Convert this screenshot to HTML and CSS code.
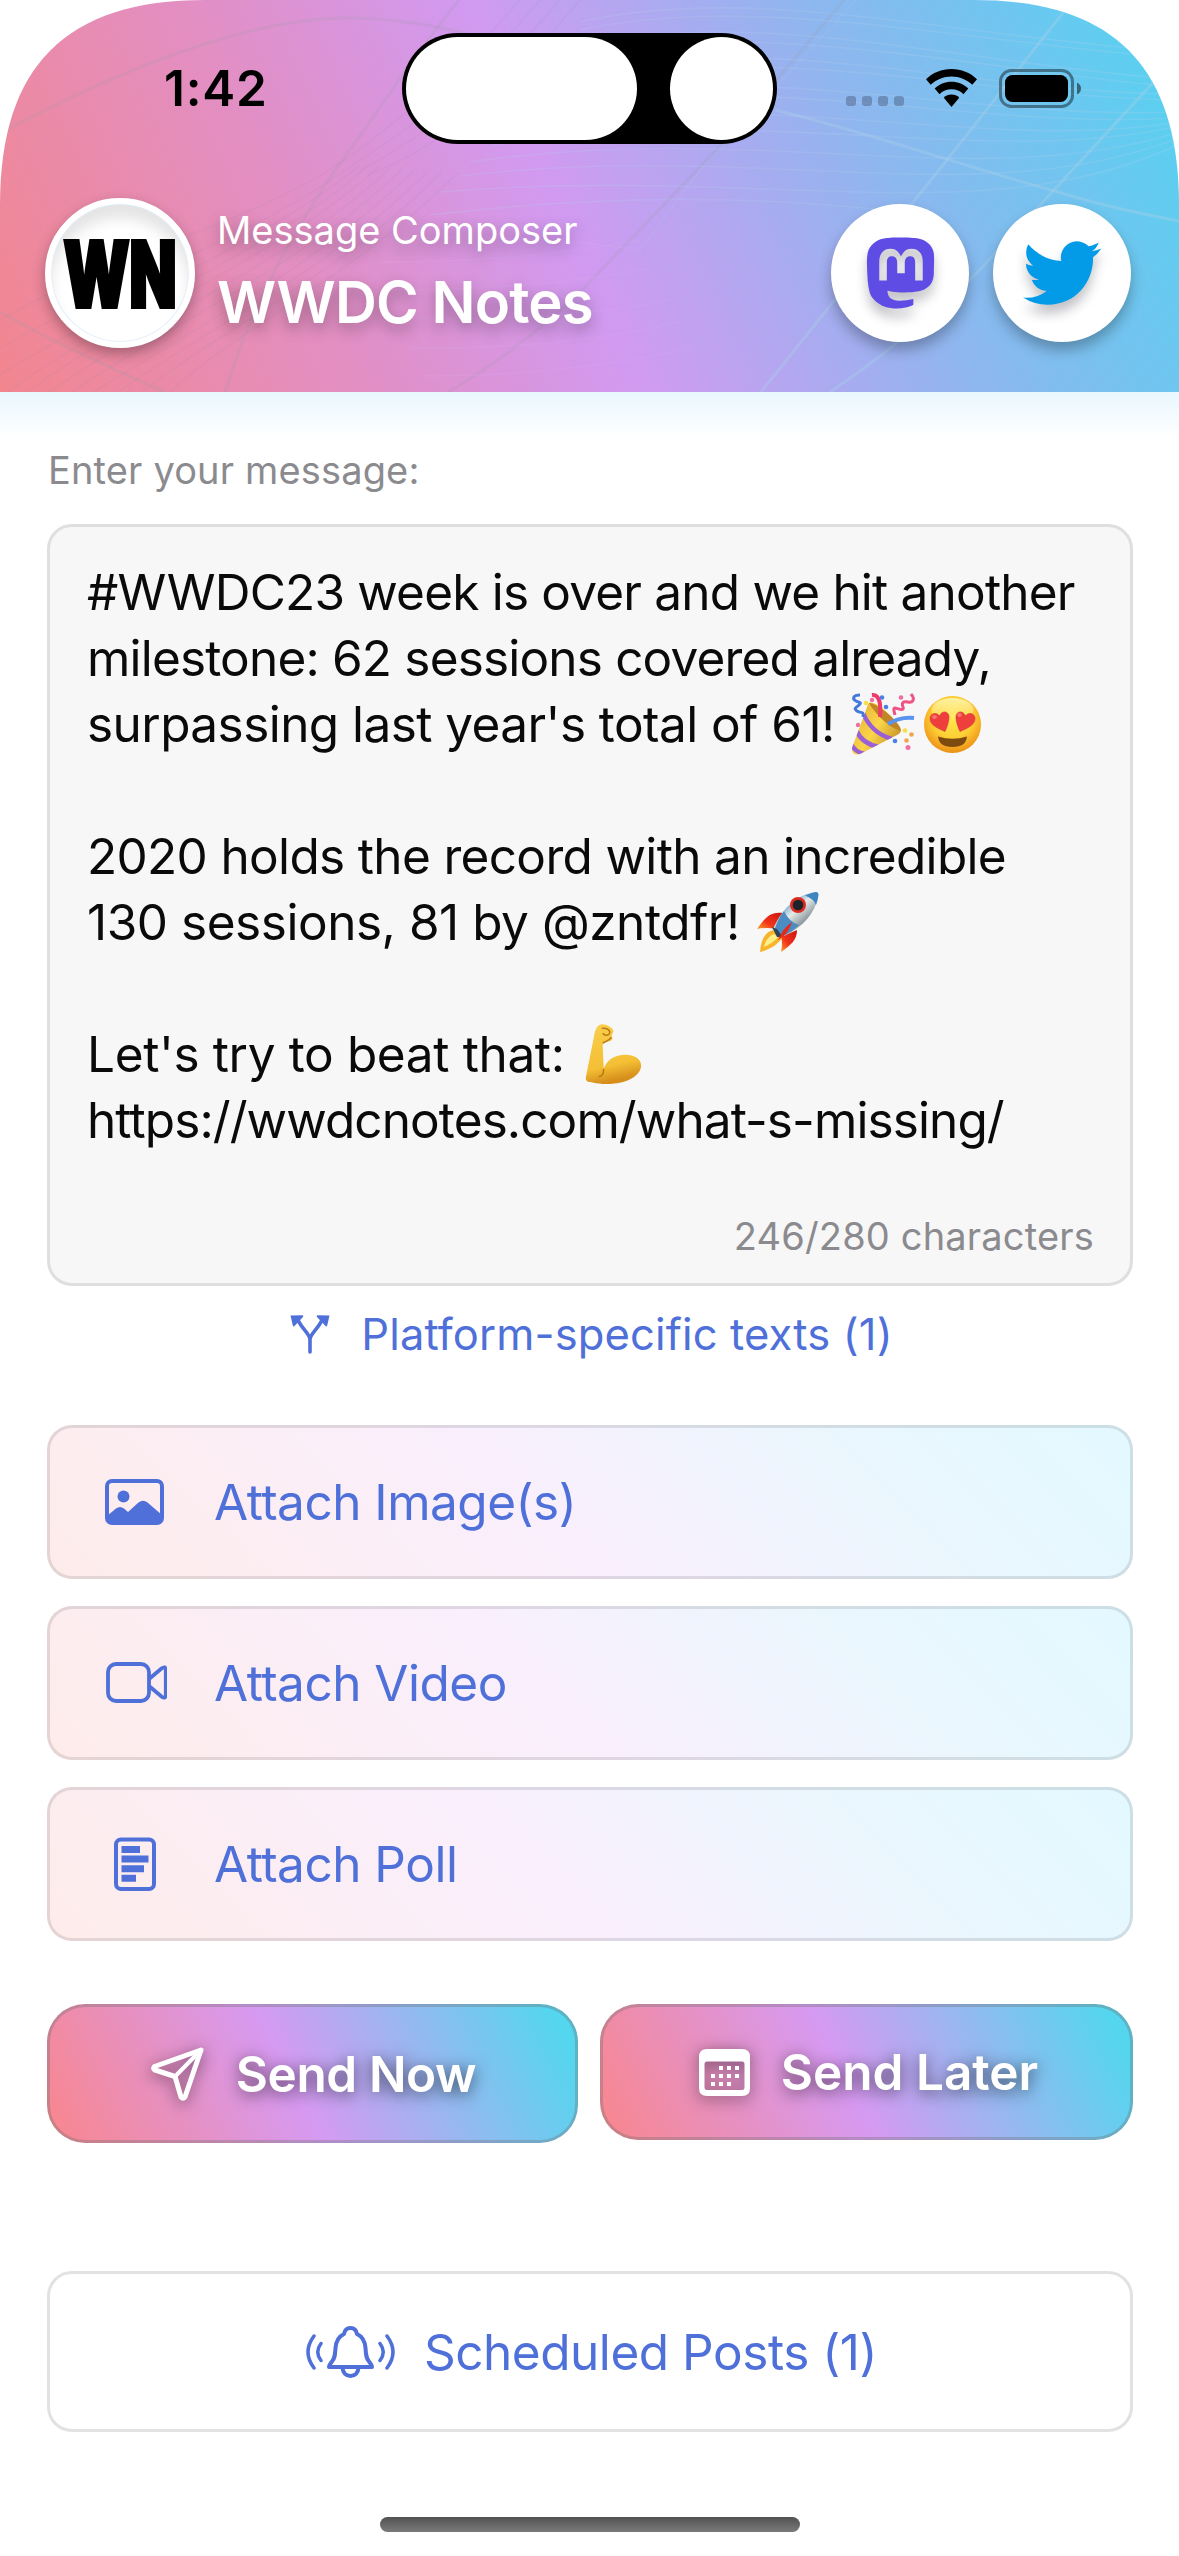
FILE: index.html
```
<!DOCTYPE html>
<html lang="en">
<head>
<meta charset="utf-8">
<title>Message Composer</title>
<link rel="stylesheet" href="styles.css">
</head>
<body>
<header class="header">
  <svg class="rays" viewBox="0 0 1179 392" fill="none">
    <g stroke="#9f9aa8" stroke-opacity=".2" stroke-width="3">
      <path d="M0 133C120 70 250 17 350 18C400 19 440 26 475 36"/>
      <path d="M459 0C410 60 380 110 338 166C290 235 250 310 225 392"/>
      <path d="M0 312C50 340 110 368 165 392"/>
      <path d="M844 0L723 143L582 290Q520 350 448 392"/>
    </g>
    <g stroke="#a9cfe8" stroke-opacity=".38" stroke-width="3">
      <path d="M1066 9L947 160L761 392"/>
      <path d="M1160 75L1042 203L970 280Q900 345 830 392"/>
      <path d="M775 110C860 130 960 165 1058 192Q1110 208 1179 221"/>
      <path d="M856 0L700 170L640 250" stroke-opacity=".2" stroke-width="1.5"/>
    </g>
    <g stroke="#8f8aa8" stroke-opacity=".1" stroke-width="1.5">
      <path d="M345 160C250 225 120 250 0 320"/>
      <path d="M352 165C260 235 110 285 0 348"/>
      <path d="M360 165C270 240 110 305 0 375"/>
      <path d="M368 166C280 245 120 310 8 392"/>
      <path d="M378 167C290 250 130 315 28 392"/>
      <path d="M390 168C300 255 150 320 50 392"/>
      <path d="M402 169C310 260 170 325 72 392"/>
      <path d="M414 170C320 265 190 330 94 392"/>
      <path d="M428 171C330 270 205 330 118 392"/>
      <path d="M442 172C340 275 220 330 142 392"/>
      <path d="M458 173C350 280 235 330 170 392"/>
      <path d="M345 160C400 120 460 70 520 0"/>
      <path d="M352 165C420 125 480 70 540 0"/>
      <path d="M360 170C440 130 500 70 560 0"/>
      <path d="M368 175C460 140 520 70 580 0"/>
    </g>
    <g stroke="#b9d2ee" stroke-opacity=".2" stroke-width="1.6">
      <path d="M580 22C740 -15 930 30 1130 48"/>
      <path d="M580 30C740 -5 930 35 1140 55"/>
      <path d="M580 48C740 5 950 60 1160 78"/>
      <path d="M560 60C740 15 950 65 1165 86"/>
      <path d="M560 80C760 25 950 90 1170 94"/>
      <path d="M540 90C760 35 960 95 1172 100"/>
      <path d="M520 105C760 55 960 120 1176 112"/>
      <path d="M520 116C760 65 960 130 1177 118"/>
      <path d="M500 134C760 80 980 155 1178 122"/>
      <path d="M490 146C760 100 980 170 1179 126"/>
      <path d="M470 162C760 120 980 195 1179 132"/>
      <path d="M460 176C760 140 980 215 1179 138"/>
      <path d="M440 192C760 165 990 235 1179 144"/>
      <path d="M430 215C640 190 800 200 900 212"/>
    </g>
    <g stroke="#d9b4f2" stroke-opacity=".16" stroke-width="1.5">
      <path d="M380 240Q520 232 640 250"/>
      <path d="M380 262Q520 262 640 240"/>
      <path d="M390 290Q540 290 650 268"/>
      <path d="M400 318Q560 322 670 300"/>
      <path d="M410 348Q560 350 680 322"/>
      <path d="M420 376Q580 376 700 345"/>
    </g>
  </svg>

  <div class="island"><span class="island-pill"></span><span class="island-lens"></span></div>

  <div class="status">
    <span class="time">1:42</span>
    <div class="status-icons">
      <span class="dots"><i></i><i></i><i></i><i></i></span>
      <svg class="wifi" viewBox="0 0 51 38">
        <path d="M25.5 0C15.7 0 6.800 3.700 0 10.200L4.700 15.800C10.200 10.700 17.500 7.500 25.500 7.500S40.800 10.700 46.300 15.800L51 10.200C44.200 3.700 35.300 0 25.500 0Z"/>
        <path d="M25.500 12.700C19 12.700 13.100 15.200 8.700 19.400L13.500 25.200C16.600 22.100 20.800 20.300 25.500 20.300S34.400 22.100 37.500 25.200L42.300 19.400C37.900 15.200 32 12.700 25.500 12.700Z"/>
        <path d="M25.500 25.500C22.500 25.500 19.800 26.700 17.800 28.700L25.500 38L33.200 28.700C31.200 26.700 28.500 25.500 25.500 25.500Z"/>
      </svg>
      <svg class="battery" viewBox="0 0 82 39">
        <rect x="1.500" y="1.500" width="72" height="36" rx="11" fill="none" stroke="#000" stroke-opacity=".42" stroke-width="3"/>
        <rect x="6" y="6" width="63" height="27" rx="7.500"/>
        <path d="M78 13.500Q82 15.500 82 19.500T78 25.500Z" fill-opacity=".5"/>
      </svg>
    </div>
  </div>

  <div class="account">
    <div class="avatar">
      <svg viewBox="0 0 138 138"><text x="12.500" y="102.500" class="wn" textLength="113" lengthAdjust="spacingAndGlyphs">WN</text></svg>
    </div>
    <div class="titles">
      <span class="kicker">Message Composer</span>
      <h1 class="title">WWDC Notes</h1>
    </div>
    <div class="networks">
      <span class="network">
        <svg class="mastodon" viewBox="0 0 24 24"><path d="M23.268 5.313c-.35-2.578-2.617-4.61-5.304-5.004C17.51.242 15.792 0 11.813 0h-.03c-3.98 0-4.835.242-5.288.309C3.882.692 1.496 2.518.917 5.127.64 6.412.61 7.837.661 9.143c.074 1.874.088 3.745.26 5.611.118 1.24.325 2.47.62 3.68.55 2.237 2.777 4.098 4.96 4.857 2.336.792 4.849.923 7.256.38.265-.061.527-.132.786-.213.585-.184 1.27-.39 1.774-.753a.057.057 0 0 0 .023-.043v-1.809a.052.052 0 0 0-.02-.041.053.053 0 0 0-.046-.01 20.282 20.282 0 0 1-4.709.545c-2.73 0-3.463-1.284-3.674-1.818a5.593 5.593 0 0 1-.319-1.433.053.053 0 0 1 .066-.054c1.517.363 3.072.546 4.632.546.376 0 .75 0 1.125-.01 1.57-.044 3.224-.124 4.768-.422.038-.008.077-.015.11-.024 2.435-.464 4.753-1.92 4.989-5.604.008-.145.03-1.52.03-1.67.002-.512.167-3.63-.024-5.545zm-3.748 9.195h-2.561V8.29c0-1.309-.55-1.976-1.67-1.976-1.23 0-1.846.79-1.846 2.35v3.403h-2.546V8.663c0-1.56-.617-2.35-1.848-2.35-1.112 0-1.668.668-1.67 1.977v6.218H4.822V8.102c0-1.31.337-2.35 1.011-3.12.696-.77 1.608-1.164 2.74-1.164 1.311 0 2.302.5 2.962 1.498l.638 1.06.638-1.06c.66-.999 1.65-1.498 2.96-1.498 1.13 0 2.043.395 2.74 1.164.675.77 1.012 1.81 1.012 3.12z"/></svg>
      </span>
      <span class="network">
        <svg class="bird" viewBox="0 0 24 24"><path d="M23.953 4.57a10 10 0 01-2.825.775 4.958 4.958 0 002.163-2.723c-.951.555-2.005.959-3.127 1.184a4.92 4.92 0 00-8.384 4.482C7.69 8.095 4.067 6.13 1.64 3.162a4.822 4.822 0 00-.666 2.475c0 1.71.87 3.213 2.188 4.096a4.904 4.904 0 01-2.228-.616v.06a4.923 4.923 0 003.946 4.827 4.996 4.996 0 01-2.212.085 4.936 4.936 0 004.604 3.417 9.867 9.867 0 01-6.102 2.105c-.39 0-.779-.023-1.17-.067a13.995 13.995 0 007.557 2.209c9.053 0 13.998-7.496 13.998-13.985 0-.21 0-.42-.015-.63A9.935 9.935 0 0024 4.59z"/></svg>
      </span>
    </div>
  </div>
</header>

<main class="main">
  <div class="label">Enter your message:</div>

  <section class="editor">
    <div class="line l1">#WWDC23 week is over and we hit another</div>
    <div class="line l2">milestone: 62 sessions covered already,</div>
    <div class="line l3">surpassing last year's total of 61!<svg class="emoji party" viewBox="0 0 62 62" role="img" aria-label="party popper">
        <defs>
          <linearGradient id="cone" x1="0" y1="0" x2="1" y2=".7"><stop offset="0" stop-color="#e0a52c"/><stop offset=".55" stop-color="#fbd54a"/><stop offset="1" stop-color="#b98320"/></linearGradient>
          <clipPath id="coneClip"><path d="M18 9.500C16 10 15 14 13 20L0 55C-.500 60 3 62.500 8 61L45 42C50 40 50 36 46 31C38 21 25 9 18 9.500Z"/></clipPath>
        </defs>
        <g clip-path="url(#coneClip)">
          <path fill="url(#cone)" d="M-2 5h56v60h-56z"/>
          <g fill="none" stroke="#9a5fd6" stroke-width="4.500"><path d="M11 20C16 32 26 42 40 46"/><path d="M4 37C8 46 16 52 27 54"/><path d="M-1 51C2 57 6 60 13 61"/></g>
        </g>
        <path d="M17 10C27 11 47 28 49 38C40 36 25 24 17 10Z" fill="#c08526"/>
        <path d="M20 2C28 1 29 12 28 24" fill="none" stroke="#ee3b67" stroke-width="4"/>
        <path d="M36 31C44 26 53 24 62 25" fill="none" stroke="#5a93f0" stroke-width="4"/>
        <path d="M8 2C1 2 0 6 4 8S10 9 7 12S1 15 5 18S12 17 11 24" fill="none" stroke="#4478dd" stroke-width="3"/>
        <path d="M59 1C64 7 60 10 56 9S49 9 51 14S45 15 43 15S42 18 43 22" fill="none" stroke="#ee5586" stroke-width="3"/>
        <g fill="#4a80e8"><circle cx="30" cy="4.500" r="2.300"/><circle cx="34" cy="14" r="2.300"/><circle cx="43" cy="48" r="2.300"/></g>
        <g fill="#ef6fa5"><circle cx="20" cy="7" r="2.200"/><circle cx="49" cy="4.500" r="2.300"/><circle cx="6" cy="32" r="2.200"/><circle cx="56" cy="54.500" r="2.500"/></g>
        <g fill="#f4e04a"><circle cx="14" cy="10" r="2.300"/><circle cx="53" cy="37.500" r="2.300"/></g>
        <g fill="#efa64b"><circle cx="59.500" cy="41.500" r="2.300"/><circle cx="54.500" cy="47.500" r="2.300"/></g>
      </svg><svg class="emoji love" viewBox="0 0 57 57" role="img" aria-label="smiling face with heart eyes">
        <defs>
          <radialGradient id="face" cx=".5" cy=".38" r=".64"><stop offset="0" stop-color="#fee94f"/><stop offset=".55" stop-color="#fdcf35"/><stop offset=".85" stop-color="#f3a11f"/><stop offset="1" stop-color="#e58c12"/></radialGradient>
          <linearGradient id="shine" x1="0" y1="0" x2="0" y2="1"><stop offset="0" stop-color="#fff6b0" stop-opacity=".9"/><stop offset="1" stop-color="#fff6b0" stop-opacity="0"/></linearGradient>
        </defs>
        <circle cx="28.500" cy="28.500" r="28.500" fill="url(#face)"/>
        <ellipse cx="28.500" cy="14" rx="21" ry="12" fill="url(#shine)"/>
        <path d="M14 40.500Q28.500 45 43 40.500Q42 51 28.500 51T14 40.500Z" fill="#7d4a10"/>
        <g fill="#ee3f3d" stroke="#d0343a" stroke-width=".6"><path d="M21 35.500C14 32.500 6 29 6 22.500C6 17.500 12.500 15.500 15.500 20C17.500 14.500 24.500 14.500 25 20.500C25.300 25 23 31 21 35.500Z"/><path d="M36 35.500C43 32.500 51 29 51 22.500C51 17.500 44.500 15.500 41.500 20C39.500 14.500 32.500 14.500 32 20.500C31.700 25 34 31 36 35.500Z"/></g>
        <g fill="#ff8b86" fill-opacity=".7"><ellipse cx="10.500" cy="21" rx="2.500" ry="2"/><ellipse cx="35.500" cy="19" rx="2.200" ry="2"/></g>
      </svg></div>
    <div class="line"></div>
    <div class="line l5">2020 holds the record with an incredible</div>
    <div class="line l6">130 sessions, 81 by @zntdfr!<svg class="emoji rocket" viewBox="0 0 62 62" role="img" aria-label="rocket">
        <defs>
          <linearGradient id="body" x1=".25" y1=".2" x2=".75" y2=".75"><stop offset="0" stop-color="#4f8fc4"/><stop offset=".45" stop-color="#e6ebe9"/><stop offset="1" stop-color="#6f8086"/></linearGradient>
          <linearGradient id="fin" x1="1" y1="0" x2="0" y2="1"><stop offset="0" stop-color="#c9140f"/><stop offset=".6" stop-color="#f2331a"/><stop offset="1" stop-color="#f9a12a"/></linearGradient>
        </defs>
        <path d="M26 22C13 20 8 27 0 38Q11 36 18 38Z" fill="url(#fin)"/>
        <path d="M40 39C40 49 34 54 24 61Q26 52 24 46Z" fill="url(#fin)"/>
        <path d="M16 39C8 41 4 49 3 61C14 58 22 53 26 45Z" fill="#f6b52c"/>
        <path d="M17 43C12 45 8 50 7 56C13 53 18 50 21 46Z" fill="#fdf08a"/>
        <path d="M59 1C42 3 27 14 16 38Q20 44 27 45C46 36 58 22 61 6Q62 1 59 1Z" fill="url(#body)"/>
        <path d="M59 1C55 1.500 51 3 48 4.500Q57 8 59 14Q61 9 61.500 4Q61.500 1 59 1Z" fill="#3d86c0"/>
        <path d="M27 20C23 25 20 31 18 37Q22 43 28 44C33 41 38 38 42 34Q32 31 27 20Z" fill="#4b8dc2"/>
        <path d="M15 36L20 38L26 46L20 46Z" fill="#29455c"/>
        <path d="M35 31Q26 37 21 49Q31 44 35 31Z" fill="#e3281c"/>
        <circle cx="41" cy="14" r="8" fill="#db2b22"/><circle cx="41" cy="14" r="5.300" fill="#1c2329"/>
      </svg></div>
    <div class="line"></div>
    <div class="line l8">Let's try to beat that:<svg class="emoji arm" viewBox="0 0 58 62" role="img" aria-label="flexed biceps">
        <defs><linearGradient id="skin" x1="0" y1="0" x2=".2" y2="1"><stop offset="0" stop-color="#f9cf4c"/><stop offset=".75" stop-color="#f4bf35"/><stop offset="1" stop-color="#d68f1c"/></linearGradient></defs>
        <path d="M16 1C12 2 10 7 9 14L1 54C0 59 3 60 8 60C14 61.500 22 62 30 61C45 60 56 52 57 44C58 35 48 31 38 32C28 33 22 38 19 46L18 22C19 19 22 19 25 18C29 17 28 15 27 13L29 8C29 4 20 0 16 1Z" fill="url(#skin)"/>
        <path d="M19 46C19 52 17 54 14 54M18 20C21 18 24 18 27 14M17 5C22 4 26 7 25 10S20 12 18 10" fill="none" stroke="#b87814" stroke-width="1.500"/>
      </svg></div>
    <div class="line l9">https://wwdcnotes.com/what-s-missing/</div>
    <div class="counter">246/280 characters</div>
  </section>

  <a class="platform">
    <svg class="i-fork" viewBox="0 0 40 40">
      <path d="M20 38V25.500C20 20 12 15 8 6M20 25.500C20 20 28 15 32 6" fill="none" stroke="currentColor" stroke-width="3.600" stroke-linecap="round"/>
      <path d="M.5 1.500L12.500 1.200Q14 1.500 13 3L4.500 12Q3.200 13 2.800 11.500ZM39.500 1.500L27.500 1.200Q26 1.500 27 3L35.500 12Q36.800 13 37.200 11.500Z" fill="currentColor"/>
    </svg>
    <span>Platform-specific texts (1)</span>
  </a>

  <div class="attachments">
    <a class="attach">
      <svg viewBox="0 0 64 56" fill="none" stroke="currentColor" stroke-width="4">
        <rect x="4" y="7" width="55" height="42" rx="5"/>
        <circle cx="20.500" cy="22.500" r="6" fill="currentColor" stroke="none"/>
        <path d="M4 42L13 34.500Q17 31.500 21 34.500L25 38L35.500 28.500Q40 25 44.500 28.500L59 41V46Q59 49 55 49H8Q4 49 4 46Z" fill="currentColor" stroke="none"/>
      </svg>
      <span>Attach Image(s)</span>
    </a>
    <a class="attach">
      <svg viewBox="0 0 64 56" fill="none" stroke="currentColor" stroke-width="3.800" stroke-linejoin="round">
        <rect x="5" y="9" width="41" height="37" rx="8"/>
        <path d="M46 24L58.500 13.500Q62.500 10.500 62.800 15V40Q62.500 44.500 58.500 41.500L46 31"/>
      </svg>
      <span>Attach Video</span>
    </a>
    <a class="attach">
      <svg viewBox="0 0 64 56" fill="none" stroke="currentColor" stroke-width="4">
        <rect x="13" y="3.500" width="38" height="49.500" rx="5"/>
        <path d="M18.500 13.500H37M18.500 23H45.500M18.500 32.700H41M18.500 42.200H33" stroke-width="7"/>
      </svg>
      <span>Attach Poll</span>
    </a>
  </div>

  <div class="send">
    <a class="btn now">
      <svg viewBox="0 0 53 54" fill="none" stroke="#fff" stroke-width="5" stroke-linejoin="round" stroke-linecap="round">
        <path d="M50 3L3.500 19.500Q1.500 21.500 4 23L24 29.500L30 50Q32 52.500 34 50Z"/>
        <path d="M24 29.500L50 3" stroke-width="4"/>
      </svg>
      <span>Send Now</span>
    </a>
    <a class="btn later">
      <svg viewBox="0 0 51 47">
        <path fill="#fff" fill-rule="evenodd" d="M8 0H43Q51 0 51 8V39Q51 47 43 47H8Q0 47 0 39V8Q0 0 8 0ZM8 12.500Q5.500 12.500 5.500 15V38.500Q5.500 41 8 41H43Q45.500 41 45.500 38.500V15Q45.500 12.500 43 12.500Z"/>
        <path stroke="#fff" stroke-width="4" stroke-dasharray="4" fill="none" d="M20 19H40M12 27H40M12 35H32"/>
      </svg>
      <span>Send Later</span>
    </a>
  </div>

  <a class="scheduled">
    <svg viewBox="0 0 89 52" fill="none" stroke="currentColor" stroke-width="4" stroke-linecap="round" stroke-linejoin="round">
      <path d="M44.500 2C40.500 2 38.500 5 38 8C32.500 10.500 30 15.500 29.500 22C29 29 29 32 26 35.500C24 38 23 39.500 23 41H66C66 39.500 65 38 63 35.500C60 32 60 29 59.500 22C59 15.500 56.500 10.500 51 8C50.500 5 48.500 2 44.500 2Z"/>
      <path d="M36.500 42C37 47 40 50 44.500 50S52 47 52.500 42"/>
      <path d="M8 10Q-4 26 8 42M15 17.500Q8.500 26 15 34.500M81 10Q93 26 81 42M74 17.500Q80.500 26 74 34.500" stroke-width="3.500"/>
    </svg>
    <span>Scheduled Posts (1)</span>
  </a>
  <div class="home-indicator"></div>
</main>
</body>
</html>
```
FILE: styles.css
```
* { box-sizing: border-box; }

body {
  margin: 0;
  width: 1179px;
  height: 2556px;
  background: #fff;
  overflow: hidden;
  font-family: Inter, "Liberation Sans", sans-serif;
  color: #0a0a0a;
}

svg { display: block; flex: none; }

/* Header */
.header {
  position: relative;
  height: 392px;
  background: linear-gradient(66deg, #f2868f 0%, #e28fc4 27%, #d19af1 47.5%, #8fb6ef 72%, #52d4f0 100%);
  clip-path: path("M0 205C0 66 66 0 205 0H974C1113 0 1179 66 1179 205V392H0Z");
}
.rays { position: absolute; inset: 0; width: 1179px; height: 392px; }

.island {
  position: absolute;
  left: 402px;
  top: 33px;
  width: 375px;
  height: 111px;
  padding: 4px;
  display: flex;
  justify-content: space-between;
  background: #000;
  border-radius: 56px;
}
.island-pill { width: 231px; height: 103px; border-radius: 52px; background: #fff; }
.island-lens { width: 103px; height: 103px; border-radius: 50%; background: #fff; }

.status {
  position: relative;
  height: 176px;
  padding: 0 98px 0 164px;
  display: flex;
  align-items: center;
  justify-content: space-between;
}
.time { font-size: 49.5px; font-weight: 600; line-height: 60px; letter-spacing: 0.8px; color: #000; }
.status-icons { display: flex; align-items: center; gap: 22px; }
.dots { display: flex; gap: 6px; margin-top: 26px; }
.dots i { width: 10px; height: 10px; border-radius: 3px; background: rgba(60, 70, 100, 0.38); }
.wifi { width: 51px; height: 38px; }
.battery { width: 82px; height: 39px; }

.account {
  position: relative;
  display: flex;
  align-items: flex-start;
  margin-top: 22px;
  padding: 0 48px 0 45px;
}
.avatar {
  width: 150px;
  height: 150px;
  border: 6px solid #fff;
  border-radius: 50%;
  background: #fff;
  box-shadow: 0 6px 14px rgba(0, 0, 0, 0.3), inset 0 0 0 1px #e3effa, inset 0 14px 14px rgba(0, 0, 0, 0.11);
}
.avatar svg { overflow: visible; }
.wn { font-size: 91px; font-weight: 900; fill: #000; stroke: #000; stroke-width: 4px; }
.titles {
  display: flex;
  flex-direction: column;
  gap: 14px;
  margin-left: 22px;
  padding-top: 9px;
  color: #fff;
  text-shadow: 0 6px 15px rgba(0, 0, 0, 0.3);
}
.kicker { font-size: 38px; line-height: 46px; }
.title { margin: 0; font-size: 58px; font-weight: 600; line-height: 70px; letter-spacing: -0.85px; }
.networks { display: flex; gap: 24px; margin: 6px 0 0 auto; }
.network {
  width: 138px;
  height: 138px;
  border-radius: 50%;
  background: #fff;
  display: flex;
  align-items: center;
  justify-content: center;
  box-shadow: 0 8px 14px rgba(0, 0, 0, 0.28);
}
.network svg { filter: drop-shadow(0 9px 6px rgba(0, 0, 20, 0.24)); }
.mastodon { width: 71px; height: 72px; fill: #5f4ce5; }
.bird { width: 78px; height: 78px; fill: #039be8; }

/* Composer */
.main {
  padding: 55px 46px 0 47px;
  background: linear-gradient(#e8f7fe, #fff 46px);
}
.label { padding-left: 1px; font-size: 38px; line-height: 46px; letter-spacing: 0.15px; color: #8b8b8f; }

.editor {
  height: 762px;
  margin-top: 31px;
  padding: 32px 36px 0 37px;
  border: 3px solid #dfdfdf;
  border-radius: 25px;
  background: #f7f7f7;
}
.line { display: flex; align-items: center; height: 66px; font-size: 49.5px; line-height: 66px; white-space: pre; }
.l1 { letter-spacing: -0.8px; }
.l2 { letter-spacing: -0.82px; }
.l3 { letter-spacing: -0.56px; }
.l5 { letter-spacing: -0.66px; }
.l6 { letter-spacing: -0.46px; }
.l8 { letter-spacing: -0.36px; }
.l9 { letter-spacing: -0.9px; }
.emoji { height: 62px; overflow: visible; }
.party { width: 62px; margin-left: 17px; }
.love { width: 57px; height: 57px; margin-left: 10px; }
.rocket { width: 62px; margin-left: 17px; margin-top: -1px; }
.arm { width: 57px; margin-left: 20px; margin-top: -1px; }
.counter { margin-top: 60px; text-align: right; font-size: 38px; line-height: 46px; letter-spacing: 0.17px; color: #8b8b8f; }

.platform {
  display: flex;
  align-items: center;
  justify-content: center;
  gap: 31px;
  margin-top: 22px;
  padding-left: 3px;
  font-size: 43.5px;
  line-height: 52px;
  letter-spacing: 0.15px;
  color: #4f70d9;
}
.i-fork { width: 40px; height: 40px; }

/* Attachment rows */
.attachments { display: flex; flex-direction: column; gap: 27px; margin-top: 65px; }
.attach {
  display: flex;
  align-items: center;
  gap: 47px;
  height: 154px;
  padding-left: 53px;
  border: 3px solid rgba(0, 0, 0, 0.1);
  border-radius: 25px;
  background: linear-gradient(45deg, #feecea 0%, #f9effd 46%, #eaf6fd 75%, #e3f9ff 98%) border-box;
  font-size: 49.5px;
  letter-spacing: -0.5px;
  color: #4f70d9;
}
.attach svg { width: 64px; height: 56px; }

/* Send buttons */
.send { display: flex; align-items: flex-start; gap: 22px; margin-top: 63px; }
.btn {
  flex: 1;
  display: flex;
  align-items: center;
  justify-content: center;
  border: 3px solid rgba(110, 110, 110, 0.34);
  border-radius: 38px;
  background: linear-gradient(63.5deg, #f78792 3%, #d69af2 46%, #54d6ef 95%) border-box;
  font-size: 49.5px;
  font-weight: 600;
  color: #fff;
  text-shadow: 0 3px 16px rgba(0, 0, 0, 0.6);
}
.btn svg { filter: drop-shadow(0 3px 8px rgba(0, 0, 0, 0.5)); }
.now { height: 139px; gap: 32px; padding-left: 2px; letter-spacing: -0.4px; }
.now svg { width: 53px; height: 54px; }
.later { height: 136px; gap: 31px; padding-left: 4px; letter-spacing: 0; }
.later svg { width: 51px; height: 47px; }

.scheduled {
  display: flex;
  align-items: center;
  justify-content: center;
  gap: 29px;
  height: 161px;
  margin-top: 128px;
  padding-left: 3px;
  border: 3px solid #e2e2e2;
  border-radius: 25px;
  font-size: 49.5px;
  letter-spacing: -0.46px;
  color: #4f70d9;
}
.scheduled svg { width: 89px; height: 52px; }

.home-indicator {
  width: 420px;
  height: 15px;
  margin: 85px auto 0;
  border-radius: 8px;
  background: linear-gradient(#505250, #7a7a7a);
}
```
